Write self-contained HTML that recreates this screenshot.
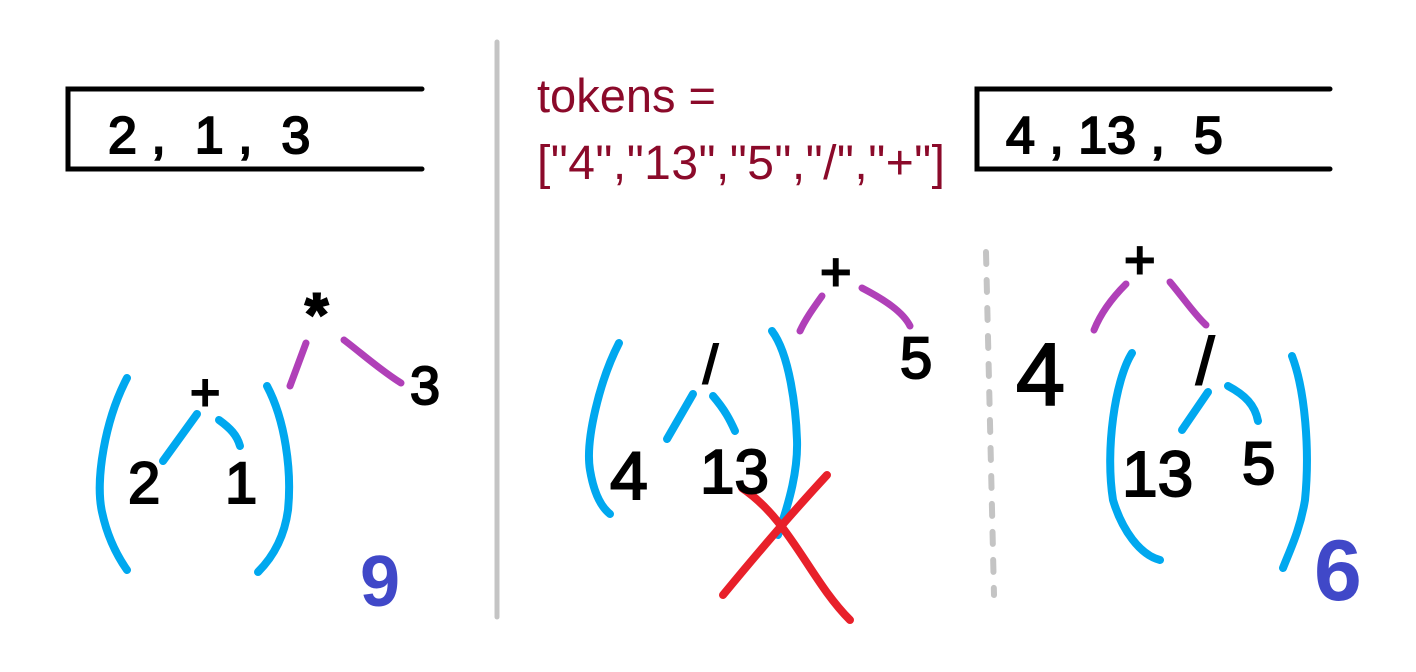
<!DOCTYPE html>
<html><head><meta charset="utf-8"><style>
html,body{margin:0;padding:0;background:#fff;}
svg{display:block;}
text{font-family:"Liberation Sans",sans-serif;}
.h{stroke:#000;stroke-width:2;}
</style></head><body>
<svg width="1416" height="672" viewBox="0 0 1416 672" xmlns="http://www.w3.org/2000/svg">
<g fill="none" stroke-linecap="round">
<path d="M422,89 L68,89 L68,169 L422,169" stroke="#000" stroke-width="5"/>
<path d="M1330,89 L977,89 L977,169 L1330,169" stroke="#000" stroke-width="5"/>
<line x1="497" y1="42" x2="497" y2="617" stroke="#c4c4c4" stroke-width="5"/>
<path d="M986,252 L994,595" stroke="#c4c4c4" stroke-width="6" stroke-dasharray="12,16"/>
<g stroke="#00a8ef" stroke-width="8">
<path d="M127,378 C105,420 95,480 102,512 C108,540 120,560 127,570"/>
<path d="M267,386 C285,420 292,470 288,510 C284,540 270,560 258,572"/>
<path d="M197,414 L163,461"/>
<path d="M219,420 C230,428 237,435 240,446"/>
</g>
<g stroke="#b040b8" stroke-width="7">
<path d="M306,343 L290,386"/>
<path d="M344,340 C360,352 380,370 401,383"/>
</g>
<g stroke="#00a8ef" stroke-width="8">
<path d="M619,343 C600,380 585,440 590,470 C595,500 605,510 610,514"/>
<path d="M772,331 C790,355 796,410 797,440 C798,470 790,500 778,535"/>
<path d="M693,394 L667,439"/>
<path d="M713,396 C725,410 730,420 735,431"/>
</g>
<g stroke="#b040b8" stroke-width="7">
<path d="M822,296 C812,310 805,320 800,331"/>
<path d="M862,288 C885,300 903,312 910,326"/>
</g>
<g stroke="#e8202a" stroke-width="8">
<path d="M827,475 C790,515 760,550 723,595"/>
<path d="M742,488 C790,520 810,580 850,620"/>
</g>
<g stroke="#b040b8" stroke-width="7">
<path d="M1126,284 C1110,300 1100,315 1094,330"/>
<path d="M1170,282 C1185,300 1195,315 1206,325"/>
</g>
<g stroke="#00a8ef" stroke-width="8">
<path d="M1132,353 C1115,380 1105,450 1113,500 C1122,530 1140,555 1160,560"/>
<path d="M1292,356 C1305,390 1310,450 1305,500 C1300,530 1290,550 1283,568"/>
<path d="M1208,392 L1182,430"/>
<path d="M1228,386 C1245,395 1255,405 1258,421"/>
</g>
</g>
<text class="h" x="108" y="153" font-size="52" fill="#000">2 ,&#160;&#160;1 ,&#160;&#160;3</text>
<text class="h" x="1006" y="153" font-size="52" fill="#000">4 , 13 ,&#160;&#160;5</text>
<text x="537" y="112" font-size="47" fill="#8b0a2a">tokens =</text>
<text x="537" y="179" font-size="48" fill="#8b0a2a" textLength="408">["4","13","5","/","+"]</text>
<text class="h" x="190" y="410" font-size="52" fill="#000">+</text>
<text class="h" x="305" y="335" font-size="60" font-weight="bold" fill="#000">*</text>
<text class="h" x="128" y="503" font-size="58" fill="#000">2</text>
<text class="h" x="225" y="503" font-size="58" fill="#000">1</text>
<text class="h" x="410" y="404" font-size="54" fill="#000">3</text>
<text x="360" y="606" font-size="72" font-weight="bold" fill="#4048c8">9</text>
<text class="h" x="820" y="290" font-size="54" fill="#000">+</text>
<text class="h" x="900" y="378" font-size="58" fill="#000">5</text>
<text class="h" x="703" y="383" font-size="54" fill="#000">/</text>
<text class="h" x="610" y="499" font-size="68" fill="#000">4</text>
<text class="h" x="700" y="493" font-size="62" fill="#000">13</text>
<text class="h" x="1124" y="278" font-size="54" fill="#000">+</text>
<text class="h" x="1016" y="405" font-size="88" fill="#000">4</text>
<text class="h" x="1196" y="384" font-size="66" fill="#000">/</text>
<text class="h" x="1122" y="496" font-size="64" fill="#000">13</text>
<text class="h" x="1242" y="484" font-size="60" fill="#000">5</text>
<text x="1314" y="600" font-size="86" font-weight="bold" fill="#4048c8">6</text>
</svg>
</body></html>
